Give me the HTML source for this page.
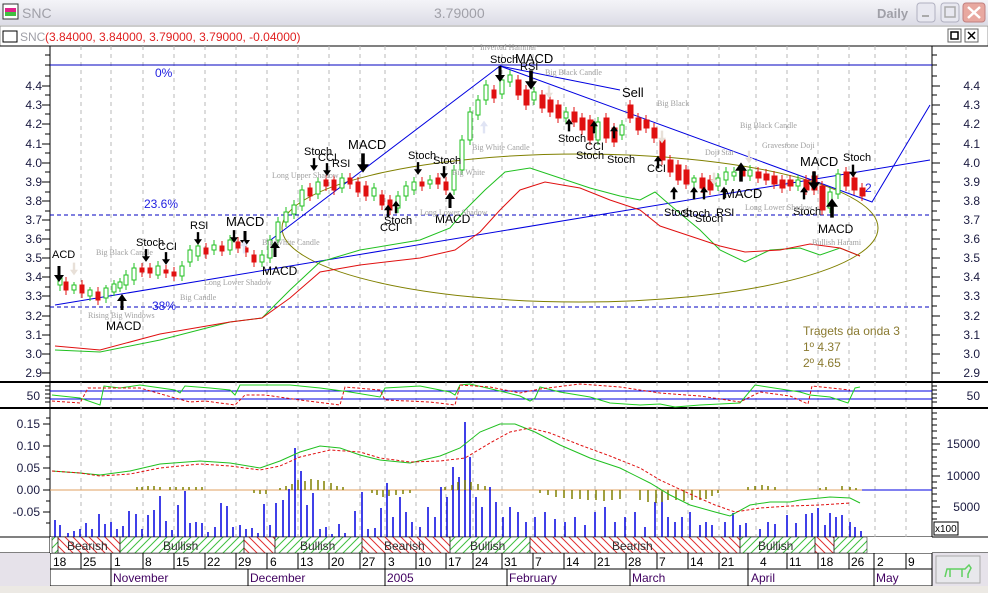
<!DOCTYPE html>
<html><head><meta charset="utf-8"><style>
body{margin:0;width:988px;height:593px;overflow:hidden;background:#fff;font-family:"Liberation Sans",sans-serif}
svg{display:block}
</style></head><body>
<svg width="988" height="593" viewBox="0 0 988 593" xmlns="http://www.w3.org/2000/svg" font-family="Liberation Sans, sans-serif">
<defs>
<linearGradient id="tb" x1="0" y1="0" x2="0" y2="1"><stop offset="0" stop-color="#f4f4f8"/><stop offset="1" stop-color="#dcdce6"/></linearGradient>
<pattern id="hr" width="8" height="8" patternUnits="userSpaceOnUse"><path d="M0 0L8 8M-4 4L4 12M4 -4L12 4" stroke="#e03030" stroke-width="1"/></pattern>
<pattern id="hg" width="8" height="8" patternUnits="userSpaceOnUse"><path d="M0 8L8 0M-4 4L4 -4M4 12L12 4" stroke="#40c040" stroke-width="1"/></pattern>
<symbol id="ad" viewBox="0 0 10 16"><path d="M3.5 0h3v9h3.5l-5 7l-5-7h3.5z" fill="#000"/></symbol>
<symbol id="au" viewBox="0 0 10 16"><path d="M3.5 16h3v-9h3.5l-5-7l-5 7h3.5z" fill="#000"/></symbol>
<symbol id="agd" viewBox="0 0 10 16"><path d="M3.5 0h3v9h3.5l-5 7l-5-7h3.5z" fill="#e8e0d8"/></symbol>
<symbol id="agu" viewBox="0 0 10 16"><path d="M3.5 16h3v-9h3.5l-5-7l-5 7h3.5z" fill="#e0e4f4"/></symbol>
</defs>
<!-- title bar -->
<rect x="0" y="0" width="988" height="25" fill="url(#tb)"/>
<rect x="3" y="4" width="15" height="15" fill="#fff" stroke="#333"/>
<rect x="5" y="8" width="11" height="4" fill="#e0208a"/><rect x="5" y="12" width="11" height="4" fill="#40c040"/>
<text x="22" y="18" font-size="14" fill="#a0a0a8">SNC</text>
<text x="434" y="18" font-size="14" fill="#a0a0a8">3.79000</text>
<text x="877" y="18" font-size="13" fill="#a0a0a8" font-weight="bold">Daily</text>
<rect x="917" y="3" width="18" height="19" rx="3" fill="#e8e8f0" stroke="#b0b0c0"/><rect x="922" y="15" width="7" height="2" fill="#aaa"/>
<rect x="941" y="3" width="18" height="19" rx="3" fill="#e8e8f0" stroke="#b0b0c0"/><rect x="945" y="7" width="10" height="10" fill="none" stroke="#aaa" stroke-width="1.5"/>
<rect x="963" y="3" width="22" height="19" rx="3" fill="#e8a8a0" stroke="#c08080"/><path d="M968 7l12 11M980 7l-12 11" stroke="#fff" stroke-width="2.5"/>
<rect x="0" y="26" width="988" height="20" fill="#fff" stroke="#999"/>
<rect x="3" y="31" width="14" height="11" fill="#fff" stroke="#000"/>
<text x="20" y="41" font-size="12" fill="#a0a0a8">SNC</text>
<text x="45" y="41" font-size="12" fill="#e02020">(3.84000, 3.84000, 3.79000, 3.79000, -0.04000)</text>
<rect x="948" y="29" width="13" height="13" fill="#fff" stroke="#666"/><rect x="951" y="32" width="7" height="7" fill="none" stroke="#000" stroke-width="1.5"/>
<rect x="965" y="29" width="13" height="13" fill="#fff" stroke="#666"/><path d="M968 32l7 7M975 32l-7 7" stroke="#000" stroke-width="1.5"/>
<line x1="0" y1="46" x2="988" y2="46" stroke="#000"/>
<!-- panel separators -->
<line x1="50" y1="46" x2="50" y2="586" stroke="#000"/>
<line x1="932" y1="46" x2="932" y2="537" stroke="#000"/>
<line x1="0" y1="382" x2="988" y2="382" stroke="#000" stroke-width="2"/>
<line x1="0" y1="408" x2="988" y2="408" stroke="#000" stroke-width="2"/>
<line x1="0" y1="537" x2="988" y2="537" stroke="#000"/>
<line x1="0" y1="553" x2="988" y2="553" stroke="#000"/>
<line x1="50" y1="569" x2="932" y2="569" stroke="#000"/>
<line x1="0" y1="586" x2="988" y2="586" stroke="#000"/>
<rect x="0" y="553" width="50" height="33" fill="#e6e2ea"/>
<rect x="0" y="586" width="988" height="7" fill="#ece9e4"/>
<rect x="932" y="553" width="56" height="33" fill="#e6e2ea"/>
<rect x="936" y="556" width="44" height="27" fill="#e8e8ec" stroke="#aaa"/>
<path d="M945 577l2-8h18l4-4 2 3-3 6v4M950 569v8M962 569v8" stroke="#60d060" fill="none" stroke-width="1.5"/>
<!-- grid -->
<g stroke="#b8b8b8" stroke-dasharray="4,4">
<path d="M81 46V537M111 46V537M143 46V537M174 46V537M205 46V537M236 46V537M267 46V537M298 46V537M329 46V537M360 46V537M385 46V537M416 46V537M446 46V537M473 46V537M502 46V537M533 46V537M564 46V537M595 46V537M626 46V537M657 46V537M688 46V537M719 46V537M756 46V537M787 46V537M818 46V537M849 46V537M875 46V537M906 46V537"/>
</g>
<!-- axis ticks -->
<g stroke="#000">
<path d="M50 55h-5M50 65h-5M50 76h-5M50 86h-8M50 95h-5M50 105h-8M50 114h-5M50 124h-8M50 134h-5M50 144h-8M50 153h-5M50 163h-8M50 172h-5M50 182h-8M50 192h-5M50 201h-8M50 211h-5M50 220h-8M50 230h-5M50 239h-8M50 249h-5M50 258h-8M50 268h-5M50 277h-8M50 287h-5M50 296h-8M50 306h-5M50 316h-8M50 325h-5M50 335h-8M50 344h-5M50 354h-8M50 363h-5M50 373h-8"/>
<path d="M932 55h5M932 65h5M932 76h5M932 86h8M932 95h5M932 105h8M932 114h5M932 124h8M932 134h5M932 144h8M932 153h5M932 163h8M932 172h5M932 182h8M932 192h5M932 201h8M932 211h5M932 220h8M932 230h5M932 239h8M932 249h5M932 258h8M932 268h5M932 277h8M932 287h5M932 296h8M932 306h5M932 316h8M932 325h5M932 335h8M932 344h5M932 354h8M932 363h5M932 373h8"/>
<path d="M50 386h-5M50 390h-5M50 394h-5M50 398h-5M50 402h-5M932 386h5M932 390h5M932 394h5M932 398h5M932 402h5"/>
<path d="M50 424h-7M50 435h-4M50 446h-7M50 457h-4M50 468h-7M50 479h-4M50 490h-7M50 501h-4M50 512h-7M50 523h-4M50 418h-4"/>
<path d="M932 413h5M932 419h5M932 425h5M932 431h5M932 438h5M932 444h8M932 450h5M932 457h5M932 463h5M932 469h5M932 476h8M932 482h5M932 488h5M932 494h5M932 501h5M932 507h8M932 513h5M932 519h5"/>
</g>
<g font-size="12" fill="#1a1a40" text-anchor="end">
<text x="42" y="90">4.4</text><text x="42" y="109">4.3</text><text x="42" y="128">4.2</text><text x="42" y="148">4.1</text><text x="42" y="167">4.0</text><text x="42" y="186">3.9</text><text x="42" y="205">3.8</text><text x="42" y="224">3.7</text><text x="42" y="243">3.6</text><text x="42" y="262">3.5</text><text x="42" y="281">3.4</text><text x="42" y="300">3.3</text><text x="42" y="320">3.2</text><text x="42" y="339">3.1</text><text x="42" y="358">3.0</text><text x="42" y="377">2.9</text>
<text x="980" y="90">4.4</text><text x="980" y="109">4.3</text><text x="980" y="128">4.2</text><text x="980" y="148">4.1</text><text x="980" y="167">4.0</text><text x="980" y="186">3.9</text><text x="980" y="205">3.8</text><text x="980" y="224">3.7</text><text x="980" y="243">3.6</text><text x="980" y="262">3.5</text><text x="980" y="281">3.4</text><text x="980" y="300">3.3</text><text x="980" y="320">3.2</text><text x="980" y="339">3.1</text><text x="980" y="358">3.0</text><text x="980" y="377">2.9</text>
<text x="40" y="400">50</text><text x="980" y="400">50</text>
<text x="40" y="428">0.15</text><text x="40" y="450">0.10</text><text x="40" y="472">0.05</text><text x="40" y="494">0.00</text><text x="40" y="516">-0.05</text>
<text x="980" y="448">15000</text><text x="980" y="480">10000</text><text x="980" y="511">5000</text>
</g>
<rect x="934" y="522" width="24" height="13" fill="#fff" stroke="#000"/><text x="935" y="532" font-size="10">x100</text>
<!-- fib lines -->
<line x1="50" y1="65" x2="932" y2="65" stroke="#0000c0"/>
<line x1="50" y1="215" x2="932" y2="215" stroke="#0000c0" stroke-dasharray="4,3"/>
<line x1="50" y1="307" x2="932" y2="307" stroke="#0000c0" stroke-dasharray="4,3"/>
<g font-size="12" fill="#2020e0"><text x="155" y="77">0%</text><text x="144" y="208">23.6%</text><text x="152" y="310">38%</text><text x="865" y="192">2</text></g>
<!-- ellipse & trendlines -->
<ellipse cx="580" cy="228" rx="298" ry="74" fill="none" stroke="#808000"/>
<g stroke="#0000e0" fill="none">
<path d="M55 305L930 160"/><path d="M268 242L500 66"/><path d="M500 66L872 202L930 105"/><path d="M500 66L620 90"/>
</g>
<!-- MAs -->
<polyline fill="none" stroke="#20c020" points="55,350 100,352 160,340 230,322 262,318 290,290 320,262 360,250 420,240 450,228 465,210 485,190 505,172 530,168 560,178 590,188 620,196 640,200 655,192 670,205 700,230 720,250 745,262 770,250 800,248 820,255 840,248 860,256"/>
<polyline fill="none" stroke="#e01010" points="55,346 100,350 160,334 230,322 262,318 290,298 320,272 360,265 420,258 455,250 480,232 500,210 520,190 545,182 580,188 610,200 640,210 660,226 690,236 720,246 745,252 780,250 810,244 840,248 860,256"/>
<!-- candles -->
<g stroke="#e01010" fill="#e01010">
<path d="M66 277v18M82 280v18M98 287v18M142 263v14M150 263v15M166 265v13M174 267v14M206 243v16M222 241v15M238 237v16M246 243v14M254 250v17M310 183v18M326 175v16M334 175v20M350 173v16M358 177v20M366 181v20M382 190v20M390 195v20M422 177v14M438 173v16M446 177v18M494 85v18M518 75v25M526 85v25M542 90v23M550 95v22M558 100v23M574 107v20M582 113v22M590 115v30M606 113v30M614 123v24M630 100v23M638 113v22M646 115v18M654 123v20M662 135v30M670 155v22M678 160v25M686 165v24M702 173v20M710 175v20M742 165v16M758 167v16M766 169v16M774 171v18M782 175v18M790 175v16M806 175v20M814 171v24M822 181v34M846 167v24M854 173v22M862 183v18"/>
<path d="M64 282h4v8h-4zM80 285h4v8h-4zM96 292h4v8h-4zM140 268h4v4h-4zM148 268h4v5h-4zM164 270h4v3h-4zM172 272h4v4h-4zM204 248h4v6h-4zM220 246h4v5h-4zM236 242h4v6h-4zM244 248h4v4h-4zM252 255h4v7h-4zM308 188h4v8h-4zM324 180h4v6h-4zM332 180h4v10h-4zM348 178h4v6h-4zM356 182h4v10h-4zM364 186h4v10h-4zM380 195h4v10h-4zM388 200h4v10h-4zM420 182h4v4h-4zM436 178h4v6h-4zM444 182h4v8h-4zM492 90h4v8h-4zM516 80h5v15h-5zM524 90h5v15h-5zM540 95h5v13h-5zM548 100h5v12h-5zM556 105h5v13h-5zM572 112h5v10h-5zM580 118h5v12h-5zM588 120h5v20h-5zM604 118h5v20h-5zM612 128h5v14h-5zM628 105h5v13h-5zM636 118h5v12h-5zM644 120h5v8h-5zM652 128h5v10h-5zM660 140h5v20h-5zM668 160h5v12h-5zM676 165h5v15h-5zM684 170h5v14h-5zM700 178h5v10h-5zM708 180h5v10h-5zM740 170h5v6h-5zM756 172h5v6h-5zM764 174h5v6h-5zM772 176h5v8h-5zM780 180h5v8h-5zM788 180h5v6h-5zM804 180h5v10h-5zM812 176h5v14h-5zM820 186h5v24h-5zM844 172h5v14h-5zM852 178h5v12h-5zM860 188h5v8h-5z"/>
</g>
<g stroke="#20c020" fill="#fff">
<path d="M60 275v16M74 282v12M90 287v14M106 285v18M114 280v16M120 278v14M126 270v20M134 263v22M158 261v18M182 261v20M190 245v22M198 241v20M214 240v15M230 235v20M262 250v17M270 235v28M278 217v28M286 207v20M294 200v19M302 185v26M318 177v22M342 173v20M374 183v18M398 191v22M406 181v20M414 177v18M430 175v14M454 165v30M462 135v40M470 107v38M478 95v25M486 80v25M502 75v24M510 70v17M534 87v18M566 107v16M598 117v28M622 120v20M694 175v12M718 173v18M726 167v18M734 167v14M750 165v16M798 175v16M830 187v26M838 169v30"/>
<path d="M58 278h4v7h-4zM72 285h4v5h-4zM88 290h4v6h-4zM104 288h4v10h-4zM112 284h4v8h-4zM118 282h4v6h-4zM124 275h4v10h-4zM132 268h4v12h-4zM156 266h4v9h-4zM180 266h4v10h-4zM188 250h4v12h-4zM196 246h4v10h-4zM212 245h4v5h-4zM228 240h4v10h-4zM260 255h4v7h-4zM268 240h4v18h-4zM276 222h4v18h-4zM284 212h4v10h-4zM292 205h4v9h-4zM300 190h4v16h-4zM316 182h4v12h-4zM340 178h4v10h-4zM372 188h4v8h-4zM396 196h4v12h-4zM404 186h4v10h-4zM412 182h4v8h-4zM428 180h4v4h-4zM452 170h4v20h-4zM460 140h4v30h-4zM468 112h4v28h-4zM476 100h4v15h-4zM484 85h4v15h-4zM500 80h4v14h-4zM508 75h4v7h-4zM532 92h4v8h-4zM564 112h4v6h-4zM596 122h4v18h-4zM620 125h4v10h-4zM692 178h4v4h-4zM716 178h4v8h-4zM724 172h4v8h-4zM732 172h4v4h-4zM748 170h4v6h-4zM796 180h4v6h-4zM828 192h4v16h-4zM836 174h4v20h-4z"/>
</g>
<!-- annotations -->
<g font-size="11" fill="#000">
<text x="52" y="258">ACD</text><text x="136" y="246">Stoch</text><text x="158" y="250">CCI</text><text x="190" y="229">RSI</text>
<text x="226" y="226" font-size="13">MACD</text><text x="262" y="275" font-size="12">MACD</text><text x="106" y="330" font-size="12">MACD</text>
<text x="304" y="155">Stoch</text><text x="318" y="161">CCI</text><text x="332" y="167">RSI</text><text x="348" y="149" font-size="13">MACD</text>
<text x="380" y="231">CCI</text><text x="384" y="224">Stoch</text><text x="408" y="159">Stoch</text><text x="433" y="164">Stoch</text><text x="435" y="223" font-size="12">MACD</text>
<text x="490" y="63">Stoch</text><text x="515" y="63" font-size="13">MACD</text><text x="520" y="70">RSI</text>
<text x="622" y="97" font-size="13">Sell</text><text x="558" y="142">Stoch</text><text x="585" y="150">CCI</text><text x="576" y="159">Stoch</text><text x="607" y="163">Stoch</text><text x="647" y="172">CCI</text>
<text x="664" y="216">Stoch</text><text x="682" y="217">Stoch</text><text x="695" y="222">Stoch</text><text x="716" y="216">RSI</text><text x="724" y="198" font-size="13">MACD</text>
<text x="800" y="166" font-size="13">MACD</text><text x="843" y="161">Stoch</text><text x="818" y="233" font-size="12">MACD</text><text x="793" y="215">Stoch</text>
</g>
<g font-size="8" fill="#a0a0a0" font-family="Liberation Serif, serif">
<text x="96" y="255">Big Black Candle</text><text x="180" y="300">Big Candle</text><text x="272" y="178">Long Upper Shadow</text><text x="204" y="285">Long Lower Shadow</text><text x="262" y="245">Big White Candle</text><text x="472" y="150">Big White Candle</text><text x="452" y="175">Big White</text><text x="420" y="215">Long Lower Shadow</text><text x="88" y="318">Rising Big Windows</text><text x="480" y="50">Inverted Hammer</text><text x="545" y="75">Big Black Candle</text><text x="657" y="106">Big Black</text><text x="740" y="128">Big Black Candle</text><text x="705" y="155">Doji Star</text><text x="762" y="148">Gravestone Doji</text><text x="745" y="210">Long Lower Shadow</text><text x="812" y="245">Bullish Harami</text>
</g>
<g>
<use href="#ad" x="54" y="265" width="10" height="18"/><use href="#au" x="117" y="293" width="10" height="18"/><use href="#ad" x="142" y="249" width="8" height="13"/><use href="#ad" x="162" y="252" width="8" height="13"/><use href="#ad" x="194" y="232" width="8" height="13"/><use href="#ad" x="230" y="230" width="8" height="13"/><use href="#ad" x="240" y="230" width="10" height="18"/><use href="#au" x="270" y="240" width="10" height="18"/>
<use href="#ad" x="310" y="158" width="8" height="13"/><use href="#ad" x="323" y="163" width="8" height="13"/><use href="#ad" x="357" y="153" width="12" height="20"/><use href="#au" x="384" y="204" width="8" height="14"/><use href="#au" x="392" y="200" width="8" height="14"/><use href="#ad" x="414" y="162" width="8" height="13"/><use href="#ad" x="440" y="166" width="8" height="13"/><use href="#au" x="445" y="192" width="10" height="16"/>
<use href="#ad" x="495" y="66" width="10" height="16"/><use href="#ad" x="525" y="70" width="12" height="20"/><use href="#au" x="565" y="118" width="8" height="14"/><use href="#au" x="590" y="120" width="8" height="14"/><use href="#au" x="610" y="125" width="8" height="14"/><use href="#au" x="654" y="155" width="8" height="14"/><use href="#au" x="670" y="186" width="8" height="14"/><use href="#au" x="690" y="186" width="8" height="14"/><use href="#au" x="700" y="186" width="8" height="14"/><use href="#au" x="720" y="186" width="8" height="14"/><use href="#au" x="735" y="162" width="12" height="20"/><use href="#ad" x="808" y="170" width="12" height="22"/><use href="#au" x="800" y="186" width="8" height="14"/><use href="#au" x="826" y="198" width="12" height="20"/><use href="#ad" x="849" y="164" width="8" height="14"/>
<use href="#agd" x="70" y="262" width="8" height="14"/><use href="#agu" x="240" y="240" width="8" height="14"/><use href="#agu" x="480" y="120" width="8" height="14"/><use href="#agd" x="545" y="85" width="8" height="14"/><use href="#agd" x="658" y="130" width="8" height="14"/><use href="#agd" x="745" y="150" width="8" height="14"/><use href="#agd" x="710" y="172" width="8" height="14"/>
</g>
<g font-size="12" fill="#8a7a30"><text x="803" y="335">Tragets da onda 3</text><text x="803" y="351">1º 4.37</text><text x="803" y="367">2º 4.65</text></g>
<!-- stoch panel -->
<line x1="50" y1="391" x2="932" y2="391" stroke="#0000e0"/><line x1="50" y1="399" x2="932" y2="399" stroke="#0000e0"/>
<polyline fill="none" stroke="#20d020" points="52,395 80,398 100,405 104,386 120,388 140,385 175,390 180,393 185,386 210,388 230,390 235,395 240,385 260,385 290,385 320,388 350,392 380,397 385,388 420,386 450,392 455,395 460,385 470,384 500,391 520,396 530,401 535,398 540,387 560,392 590,397 610,403 640,405 660,404 675,407 700,405 720,404 740,403 755,385 800,392 810,395 830,397 848,403 855,388 860,387"/>
<polyline fill="none" stroke="#e01010" stroke-dasharray="3,2" points="52,401 80,403 88,388 140,388 175,398 190,402 205,401 235,405 245,395 265,395 300,400 340,405 345,387 380,390 385,400 430,402 455,405 460,385 490,387 520,393 540,389 580,384 620,387 660,393 700,396 740,402 760,392 790,396 808,404 812,386 850,390"/>
<!-- MACD panel -->
<line x1="50" y1="490" x2="870" y2="490" stroke="#e0a060"/><line x1="862" y1="490" x2="932" y2="490" stroke="#0000e0"/>
<g stroke="#0000e0" stroke-width="1.5">
<path d="M55 537v-17M60 537v-12M68 537v-4M74 537v-6M80 537v-8M86 537v-14M92 537v-8M99 537v-23M105 537v-13M111 537v-15M117 537v-8M123 537v-11M129 537v-26M136 537v-23M142 537v-8M148 537v-22M154 537v-27M160 537v-41M166 537v-16M172 537v-7M178 537v-32M185 537v-46M190 537v-14M196 537v-15M202 537v-14M208 537v-5M215 537v-10M221 537v-34M227 537v-31M233 537v-10M240 537v-12M246 537v-8M252 537v-9M258 537v-4M264 537v-33M270 537v-12M276 537v-34M283 537v-37M289 537v-48M295 537v-89M301 537v-66M307 537v-32M313 537v-44M320 537v-8M326 537v-10M332 537v-3M339 537v-13M345 537v-4M355 537v-26M362 537v-45M368 537v-8M375 537v-9M381 537v-29M387 537v-54M393 537v-20M400 537v-40M406 537v-25M412 537v-15M420 537v-10M428 537v-30M435 537v-20M441 537v-50M447 537v-40M453 537v-70M459 537v-60M465 537v-115M470 537v-80M476 537v-40M482 537v-30M490 537v-50M496 537v-35M503 537v-20M510 537v-30M518 537v-25M526 537v-15M535 537v-20M545 537v-25M555 537v-18M565 537v-15M575 537v-20M585 537v-12M595 537v-25M605 537v-30M615 537v-15M625 537v-20M635 537v-25M645 537v-10M655 537v-35M662 537v-45M668 537v-20M675 537v-15M682 537v-20M690 537v-25M700 537v-12M706 537v-15M712 537v-12M725 537v-15M733 537v-24M740 537v-12M746 537v-14M760 537v-8M768 537v-15M775 537v-13M787 537v-22M796 537v-14M806 537v-23M812 537v-24M818 537v-29M825 537v-12M830 537v-24M836 537v-20M842 537v-22M850 537v-15M855 537v-10M861 537v-6"/>
</g>
<g stroke="#808000" stroke-width="1.5">
<path d="M137 490v-3M142 490v-3M148 490v-4M154 490v-4M160 490v-3M170 490v-3M176 490v-3M183 490v-3M189 490v-3M196 490v-3M202 490v-3M254 490v3M260 490v4M266 490v4M280 490v-2M286 490v-4M292 490v-6M298 490v-10M305 490v-9M311 490v-11M318 490v-10M324 490v-9M331 490v-7M337 490v-4M343 490v-3M372 490v3M377 490v5M383 490v7M389 490v6M396 490v5M403 490v4M410 490v3M445 490v-3M452 490v-5M458 490v-8M465 490v-10M471 490v-8M478 490v-6M485 490v-4M540 490v3M548 490v5M556 490v7M564 490v8M572 490v9M580 490v9M588 490v10M596 490v10M604 490v11M612 490v10M620 490v9M640 490v10M648 490v12M656 490v13M662 490v12M668 490v10M676 490v10M684 490v11M692 490v10M700 490v10M706 490v9M712 490v6M718 490v3M748 490v-3M755 490v-4M762 490v-5M768 490v-4M775 490v-3M820 490v-2M826 490v-3M842 490v-4M850 490v-3M856 490v-2"/>
</g>
<polyline fill="none" stroke="#20c020" points="52,471 80,473 100,475 130,471 160,464 200,461 230,463 260,468 280,461 300,452 320,446 340,448 360,455 380,460 410,463 440,456 460,448 480,432 500,424 515,424 535,432 560,445 590,458 620,468 650,483 670,495 690,505 715,512 730,516 750,505 770,502 790,502 800,500 810,499 830,497 850,498 860,503"/>
<polyline fill="none" stroke="#e01010" stroke-dasharray="3,2" points="52,471 80,473 100,476 130,474 160,468 200,464 230,466 260,470 280,466 300,457 330,450 360,452 380,458 410,462 440,461 465,458 490,443 510,432 530,428 550,433 580,445 610,456 640,468 660,480 690,494 715,505 735,512 760,508 790,506 820,505 850,503"/>
<!-- band -->
<rect x="50" y="537" width="882" height="16" fill="#fff"/>
<rect x="52" y="537" width="6" height="16" fill="url(#hg)" stroke="#000" stroke-width=".5"/>
<rect x="58" y="537" width="62" height="16" fill="url(#hr)" stroke="#000" stroke-width=".5"/>
<rect x="120" y="537" width="124" height="16" fill="url(#hg)" stroke="#000" stroke-width=".5"/>
<rect x="244" y="537" width="31" height="16" fill="url(#hr)" stroke="#000" stroke-width=".5"/>
<rect x="275" y="537" width="87" height="16" fill="url(#hg)" stroke="#000" stroke-width=".5"/>
<rect x="362" y="537" width="88" height="16" fill="url(#hr)" stroke="#000" stroke-width=".5"/>
<rect x="450" y="537" width="80" height="16" fill="url(#hg)" stroke="#000" stroke-width=".5"/>
<rect x="530" y="537" width="210" height="16" fill="url(#hr)" stroke="#000" stroke-width=".5"/>
<rect x="740" y="537" width="75" height="16" fill="url(#hg)" stroke="#000" stroke-width=".5"/>
<rect x="815" y="537" width="19" height="16" fill="url(#hr)" stroke="#000" stroke-width=".5"/>
<rect x="834" y="537" width="33" height="16" fill="url(#hg)" stroke="#000" stroke-width=".5"/>
<g font-size="12" fill="#303030"><text x="67" y="550">Bearish</text><text x="163" y="550">Bullish</text><text x="300" y="550">Bullish</text><text x="384" y="550">Bearish</text><text x="470" y="550">Bullish</text><text x="612" y="550">Bearish</text><text x="758" y="550">Bullish</text></g>
<!-- dates -->
<g stroke="#000"><path d="M81 553v16M111 553v33M143 553v16M174 553v16M205 553v16M236 553v16M248 569v17M267 553v16M298 553v16M329 553v16M360 553v16M385 553v33M416 553v16M446 553v16M473 553v16M502 553v16M507 569v17M533 553v16M564 553v16M595 553v16M626 553v16M630 569v17M657 553v16M688 553v16M719 553v16M748 553v33M787 553v16M818 553v16M849 553v16M874 553v33M906 553v16M932 553v33"/></g>
<g font-size="12" fill="#000"><text x="53" y="566">18</text><text x="83" y="566">25</text><text x="114" y="566">1</text><text x="145" y="566">8</text><text x="176" y="566">15</text><text x="207" y="566">22</text><text x="238" y="566">29</text><text x="270" y="566">6</text><text x="300" y="566">13</text><text x="331" y="566">20</text><text x="362" y="566">27</text><text x="388" y="566">3</text><text x="418" y="566">10</text><text x="448" y="566">17</text><text x="475" y="566">24</text><text x="504" y="566">31</text><text x="535" y="566">7</text><text x="566" y="566">14</text><text x="597" y="566">21</text><text x="628" y="566">28</text><text x="659" y="566">7</text><text x="690" y="566">14</text><text x="721" y="566">21</text><text x="760" y="566">4</text><text x="789" y="566">11</text><text x="820" y="566">18</text><text x="851" y="566">26</text><text x="877" y="566">2</text><text x="908" y="566">9</text></g>
<g font-size="12" fill="#400060"><text x="113" y="582">November</text><text x="250" y="582">December</text><text x="387" y="582">2005</text><text x="509" y="582">February</text><text x="632" y="582">March</text><text x="751" y="582">April</text><text x="876" y="582">May</text></g>
</svg>
</body></html>
